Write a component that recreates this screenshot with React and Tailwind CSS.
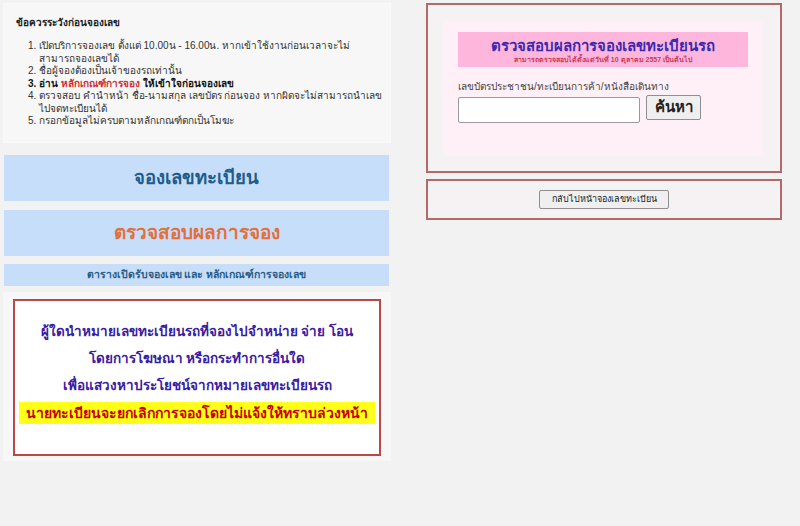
export default function App() {
  return (
    <div className="w-[800px] h-[526px] bg-[#f2f2f2] overflow-hidden text-[#222]" style={{ fontFamily: '"Liberation Sans", "DejaVu Sans", sans-serif' }}>
      <div className="flex items-start pt-[3px] pl-[3px]">
        {/* left column */}
        <div className="w-[388px] flex flex-col">
          <div className="h-[140px] bg-[#f7f7f7] border border-[#fafafa] pl-[12px] pt-[12px]">
            <div className="text-[10px] font-bold leading-[14px]">ข้อควรระวังก่อนจองเลข</div>
            <ol className="mt-[10px] pl-[23px] list-decimal text-[10px] leading-[12.5px] text-[#333] w-[370px] whitespace-nowrap">
              <li>เปิดบริการจองเลข ตั้งแต่ 10.00น - 16.00น. หากเข้าใช้งานก่อนเวลาจะไม่<br />สามารถจองเลขได้</li>
              <li>ชื่อผู้จองต้องเป็นเจ้าของรถเท่านั้น</li>
              <li className="font-bold text-[#111]">อ่าน <span className="text-[#d03030]">หลักเกณฑ์การจอง</span> ให้เข้าใจก่อนจองเลข</li>
              <li>ตรวจสอบ คำนำหน้า ชื่อ-นามสกุล เลขบัตร ก่อนจอง หากผิดจะไม่สามารถนำเลข<br />ไปจดทะเบียนได้</li>
              <li>กรอกข้อมูลไม่ครบตามหลักเกณฑ์ตกเป็นโมฆะ</li>
            </ol>
          </div>
          <div className="mt-[12px] ml-[1px] w-[385px] h-[46px] bg-[#c6defa] flex items-center justify-center text-[18.5px] font-bold text-[#215b8b]">จองเลขทะเบียน</div>
          <div className="mt-[9px] ml-[1px] w-[385px] h-[46px] bg-[#c6defa] flex items-center justify-center text-[19px] font-bold text-[#e2703a]">ตรวจสอบผลการจอง</div>
          <div className="mt-[8px] ml-[1px] w-[385px] h-[22px] bg-[#c6defa] flex items-center justify-center text-[10.5px] font-bold text-[#2a5c85]">ตารางเปิดรับจองเลข และ หลักเกณฑ์การจองเลข</div>
          <div className="mt-[6px] w-[388px] h-[169px] bg-[#f7f7f7] pl-[10px] pt-[7px]">
            <div className="w-[368px] h-[157px] bg-white border-2 border-[#b94848] flex flex-col items-center pt-[17px]">
              <div className="text-[13.5px] leading-[27px] text-[#3a20a0] font-bold text-center whitespace-nowrap">ผู้ใดนำหมายเลขทะเบียนรถที่จองไปจำหน่าย จ่าย โอน</div>
              <div className="text-[13.5px] leading-[27px] text-[#3a20a0] font-bold text-center whitespace-nowrap">โดยการโฆษณา หรือกระทำการอื่นใด</div>
              <div className="text-[13.5px] leading-[27px] text-[#3a20a0] font-bold text-center whitespace-nowrap">เพื่อแสวงหาประโยชน์จากหมายเลขทะเบียนรถ</div>
              <div className="mt-[3px] w-[356px] h-[22px] bg-[#ffff1a] flex items-center justify-center text-[14px] font-bold text-[#c80000] whitespace-nowrap">นายทะเบียนจะยกเลิกการจองโดยไม่แจ้งให้ทราบล่วงหน้า</div>
            </div>
          </div>
        </div>
        {/* right column */}
        <div className="ml-[35px] w-[356px] flex flex-col">
          <div className="h-[170px] border-2 border-[#b56a6a] bg-[#f4f2f3] pl-[15px] pt-[16px]">
            <div className="w-[320px] h-[135px] bg-[#fff0f7] pl-[15px] pt-[11px]">
              <div className="w-[290px] h-[35px] bg-[#ffb6dd] flex flex-col items-center justify-center">
                <div className="text-[15px] leading-[19px] font-bold text-[#3a2ab0]">ตรวจสอบผลการจองเลขทะเบียนรถ</div>
                <div className="text-[7px] leading-[9px] font-bold text-[#c83c5a]">สามารถตรวจสอบได้ตั้งแต่วันที่ 10 ตุลาคม 2557 เป็นต้นไป</div>
              </div>
              <div className="mt-[13px] text-[10px] leading-[13px] text-[#444]">เลขบัตรประชาชน/ทะเบียนการค้า/หนังสือเดินทาง</div>
              <div className="flex items-start mt-[2px]">
                <div className="w-[182px] h-[26px] bg-white border border-[#9a9a9a] rounded-[2px] mt-[2px]"></div>
                <div className="ml-[6px] w-[55px] h-[25px] bg-[#efefef] border border-[#8f8f8f] rounded-[2px] flex items-center justify-center text-[15px] font-bold text-[#222]">ค้นหา</div>
              </div>
            </div>
          </div>
          <div className="mt-[6px] h-[41px] border-2 border-[#b56a6a] bg-[#f4f2f3] flex items-center justify-center">
            <div className="w-[130px] h-[19px] bg-[#efefef] border border-[#8f8f8f] rounded-[2px] flex items-center justify-center text-[9px] text-[#222]">กลับไปหน้าจองเลขทะเบียน</div>
          </div>
        </div>
      </div>
    </div>
  );
}
